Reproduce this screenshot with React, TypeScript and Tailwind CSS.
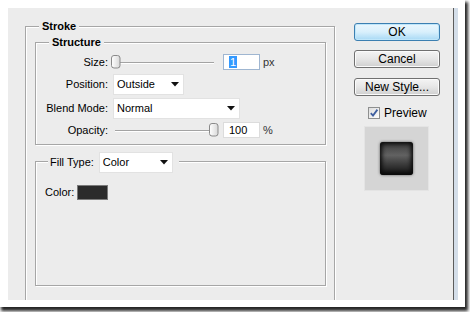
import React from "react";

const FONT = { fontFamily: '"Liberation Sans", Arial, sans-serif' };

function Arrow() {
  return (
    <svg width="8" height="5" viewBox="0 0 8 5" className="shrink-0">
      <polygon points="0,0 8,0 4,4.5" fill="#111" />
    </svg>
  );
}

function Dropdown({ w, text }: { w: string; text: string }) {
  return (
    <div className={`${w} h-[21px] bg-white border border-[#e2e2e2] flex items-center justify-between pl-[3px] pr-[4px] text-[11px] text-black`}>
      <span>{text}</span>
      <Arrow />
    </div>
  );
}

function Thumb() {
  return (
    <svg width="10" height="14" viewBox="0 0 10 14">
      <defs>
        <linearGradient id="tg" x1="0" y1="0" x2="1" y2="0">
          <stop offset="0" stopColor="#ffffff" />
          <stop offset="1" stopColor="#d8d8d8" />
        </linearGradient>
      </defs>
      <rect x="0.5" y="0.5" width="8.5" height="12.5" rx="2.5" fill="url(#tg)" stroke="#8a8a8a" />
    </svg>
  );
}

function Slider({ w, side }: { w: string; side: "left" | "right" }) {
  return (
    <div className={`relative ${w} h-[15px]`}>
      <div className={`absolute top-[7px] ${side === "left" ? "left-[4px] right-0" : "left-[4px] right-[4px]"} h-[1px] bg-[#a3a3a3] shadow-[0_1px_0_#fff]`} />
      <div className={`absolute top-0 ${side === "left" ? "left-0" : "right-0"}`}>
        <Thumb />
      </div>
    </div>
  );
}

function Legend({ children, className }: { children: React.ReactNode; className: string }) {
  return (
    <div className={`self-start bg-[#ececec] px-[3px] leading-[13px] ${className}`}>{children}</div>
  );
}

function Btn({ children, primary, className = "" }: { children: React.ReactNode; primary?: boolean; className?: string }) {
  return (
    <div
      className={`w-[86px] h-[18px] rounded-[3px] flex items-center justify-center text-[12px] text-black leading-none ${
        primary
          ? "border border-[#3c7fb1] bg-gradient-to-b from-[#eaf6fd] via-[#d9f0fc] to-[#a7d9f5] shadow-[inset_0_0_0_1px_#bfe6fa]"
          : "border border-[#707070] bg-gradient-to-b from-[#f4f4f4] via-[#e6e6e6] to-[#cfcfcf] shadow-[inset_0_0_0_1px_#fbfbfb]"
      } ${className}`}
    >
      {children}
    </div>
  );
}

const box = "border border-[#a6a6a6] shadow-[1px_1px_0_#fff,inset_1px_1px_0_#fff]";

export default function App() {
  return (
    <div className="w-[470px] h-[312px] bg-white overflow-hidden" style={FONT}>
      <div className="w-[465px] h-[307px] bg-white shadow-[2px_3px_3px_1px_rgba(0,0,0,0.85)] pt-[8px] pl-[8px] flex">
        <div className="w-[446px] h-[292px] bg-[#ececec] border-r border-[#5c5c5c] flex overflow-hidden">
          {/* Left column */}
          <div className="pl-[17px] pt-[18px] shrink-0">
            <div className={`w-[310px] h-[300px] flex flex-col ${box}`}>
              <Legend className="-mt-[7px] ml-[13px] font-bold text-[11px] text-black">Stroke</Legend>

              {/* Structure */}
              <div className={`ml-[9px] mt-[9px] w-[291px] h-[103px] flex flex-col ${box}`}>
                <Legend className="-mt-[7px] ml-[13px] font-bold text-[11px] text-black">Structure</Legend>

                <div className="mt-[5px] h-[16px] flex items-center text-[11px] text-black">
                  <div className="w-[72px] text-right">Size:</div>
                  <div className="ml-[3px]">
                    <Slider w="w-[103px]" side="left" />
                  </div>
                  <div className="ml-[9px] w-[37px] h-[16px] bg-white border border-[#9fb6d1] flex items-center pl-[5px]">
                    <span className="bg-[#3399ff] text-white leading-[12px] px-[1px]">1</span>
                  </div>
                  <span className="ml-[3px] text-[#333]">px</span>
                </div>

                <div className="mt-[4px] h-[21px] flex items-center text-[11px] text-black">
                  <div className="w-[72px] text-right">Position:</div>
                  <div className="ml-[5px]">
                    <Dropdown w="w-[71px]" text="Outside" />
                  </div>
                </div>

                <div className="mt-[3px] h-[21px] flex items-center text-[11px] text-black">
                  <div className="w-[72px] text-right">Blend Mode:</div>
                  <div className="ml-[5px]">
                    <Dropdown w="w-[127px]" text="Normal" />
                  </div>
                </div>

                <div className="mt-[3px] h-[16px] flex items-center text-[11px] text-black">
                  <div className="w-[72px] text-right">Opacity:</div>
                  <div className="ml-[3px]">
                    <Slider w="w-[108px]" side="right" />
                  </div>
                  <div className="ml-[4px] w-[37px] h-[16px] bg-white border border-[#dcdcdc] flex items-center pl-[5px]">
                    100
                  </div>
                  <span className="ml-[3px] text-[#333]">%</span>
                </div>
              </div>

              {/* Fill */}
              <div className={`ml-[9px] mt-[16px] w-[291px] h-[125px] flex flex-col ${box}`}>
                <div className="self-start -mt-[10px] ml-[12px] bg-[#ececec] pl-[2px] pr-[6px] flex items-center gap-[5px] text-[11px] text-black">
                  <span>Fill Type:</span>
                  <Dropdown w="w-[74px]" text="Color" />
                </div>
                <div className="mt-[11px] ml-[9px] flex items-center text-[11px] text-black">
                  <span>Color:</span>
                  <div className="ml-[3px] w-[31px] h-[15px] bg-[#2b2b2b] border border-[#7a7a7a]" />
                </div>
              </div>
            </div>
          </div>

          {/* Right column */}
          <div className="flex-1 flex flex-col pl-[19px] pt-[15px]">
            <Btn primary>OK</Btn>
            <Btn className="mt-[9px]">Cancel</Btn>
            <Btn className="mt-[10px]">New Style...</Btn>
            <div className="mt-[10px] ml-[14px] flex items-center h-[13px]">
              <svg width="12" height="12" viewBox="0 0 12 12">
                <defs>
                  <linearGradient id="cb" x1="0" y1="0" x2="1" y2="1">
                    <stop offset="0" stopColor="#dcdcdc" />
                    <stop offset="1" stopColor="#ffffff" />
                  </linearGradient>
                </defs>
                <rect x="0.5" y="0.5" width="11" height="11" fill="url(#cb)" stroke="#8e8f8f" />
                <path d="M2.8 6.2 L5 8.6 L9.4 2.6" fill="none" stroke="#3f5fa0" strokeWidth="1.8" />
              </svg>
              <span className="ml-[4px] text-[12px] text-black leading-none">Preview</span>
            </div>
            <div className="mt-[7px] ml-[10px] w-[65px] h-[65px] bg-[#d5d5d5] border border-[#e4e4e4] flex items-center justify-center">
              <div className="w-[33px] h-[33px] rounded-[3px] bg-gradient-to-b from-[#3a3a3a] via-[#626262] via-40% to-[#121212] shadow-[inset_0_0_4px_2px_#0a0a0a,0_0_3px_#555]" />
            </div>
          </div>
        </div>
        <div className="w-[4px] h-[292px] bg-[#d4dee9]" />
      </div>
    </div>
  );
}
